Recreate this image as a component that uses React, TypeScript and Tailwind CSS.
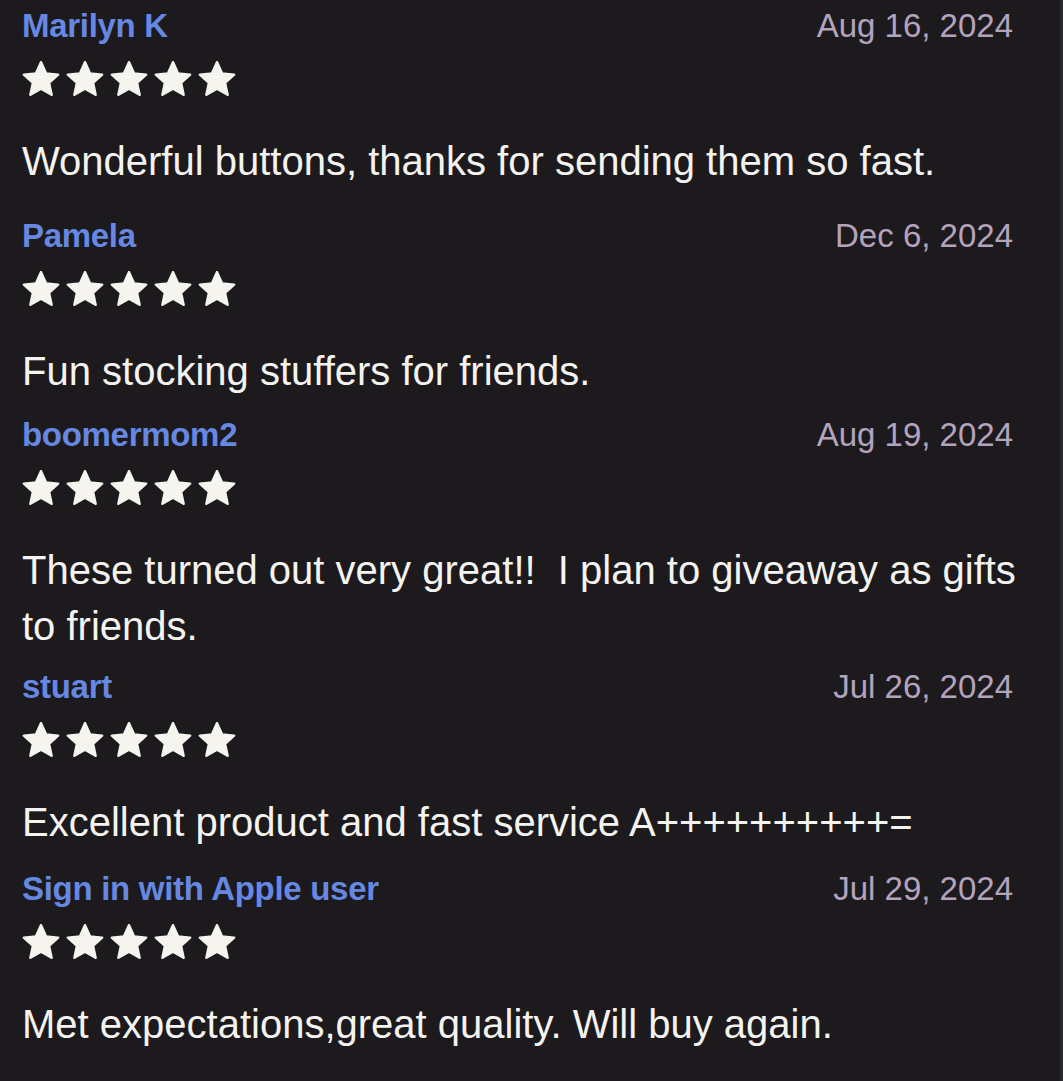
import React from 'react';

interface Review {
    name: string;
    date: string;
    rating: number;
    text: string;
    spacing: string;
}

const reviews: Review[] = [
    { name: 'Marilyn K', date: 'Aug 16, 2024', rating: 5, text: 'Wonderful buttons, thanks for sending them so fast.', spacing: 'pt-[6px]' },
    { name: 'Pamela', date: 'Dec 6, 2024', rating: 5, text: 'Fun stocking stuffers for friends.', spacing: 'pt-[27px]' },
    { name: 'boomermom2', date: 'Aug 19, 2024', rating: 5, text: 'These turned out very great!!  I plan to giveaway as gifts to friends.', spacing: 'pt-[16px]' },
    { name: 'stuart', date: 'Jul 26, 2024', rating: 5, text: 'Excellent product and fast service A++++++++++=', spacing: 'pt-[13px]' },
    { name: 'Sign in with Apple user', date: 'Jul 29, 2024', rating: 5, text: 'Met expectations,great quality. Will buy again.', spacing: 'pt-[19px]' },
];

// rounded five-point star, fatter than a regular one
const Star: React.FC = () => (
    <svg width="38" height="36" viewBox="0 0 38 36" className="shrink-0">
        <polygon
            points="19,1.2 23.97,12.38 36.12,13.64 27.04,21.81 29.58,33.76 19,27.65 8.42,33.76 10.96,21.81 1.88,13.64 14.03,12.38"
            fill="#f5f4ef"
            stroke="#f5f4ef"
            strokeWidth="2.5"
            strokeLinejoin="round"
        />
    </svg>
);

const ReviewItem: React.FC<{ review: Review }> = ({ review }) => (
    <div className={review.spacing}>
        <div className="flex items-baseline justify-between pr-[47px]">
            <span className="text-[33px] leading-[40px] font-bold text-[#6688e3] tracking-[-0.3px]">{review.name}</span>
            <span className="text-[33px] leading-[40px] text-[#b4a3bd]">{review.date}</span>
        </div>
        <div className="flex gap-[6px] mt-[15px]">
            {Array.from({ length: review.rating }).map((_, i) => <Star key={i} />)}
        </div>
        <p className="mt-[36px] text-[40px] leading-[56px] text-[#f4f3ef] whitespace-pre-wrap pr-[40px]">{review.text}</p>
    </div>
);

const App: React.FC = () => {
    return (
        <div className="min-h-[1081px] w-[1063px] bg-[#1c1a1d] border-r-[3px] border-[#2b2a2c] pl-[22px] overflow-hidden" style={{ fontFamily: '"Liberation Sans", Arial, sans-serif' }}>
            {reviews.map(r => <ReviewItem key={r.name} review={r} />)}
        </div>
    );
};

export default App;
